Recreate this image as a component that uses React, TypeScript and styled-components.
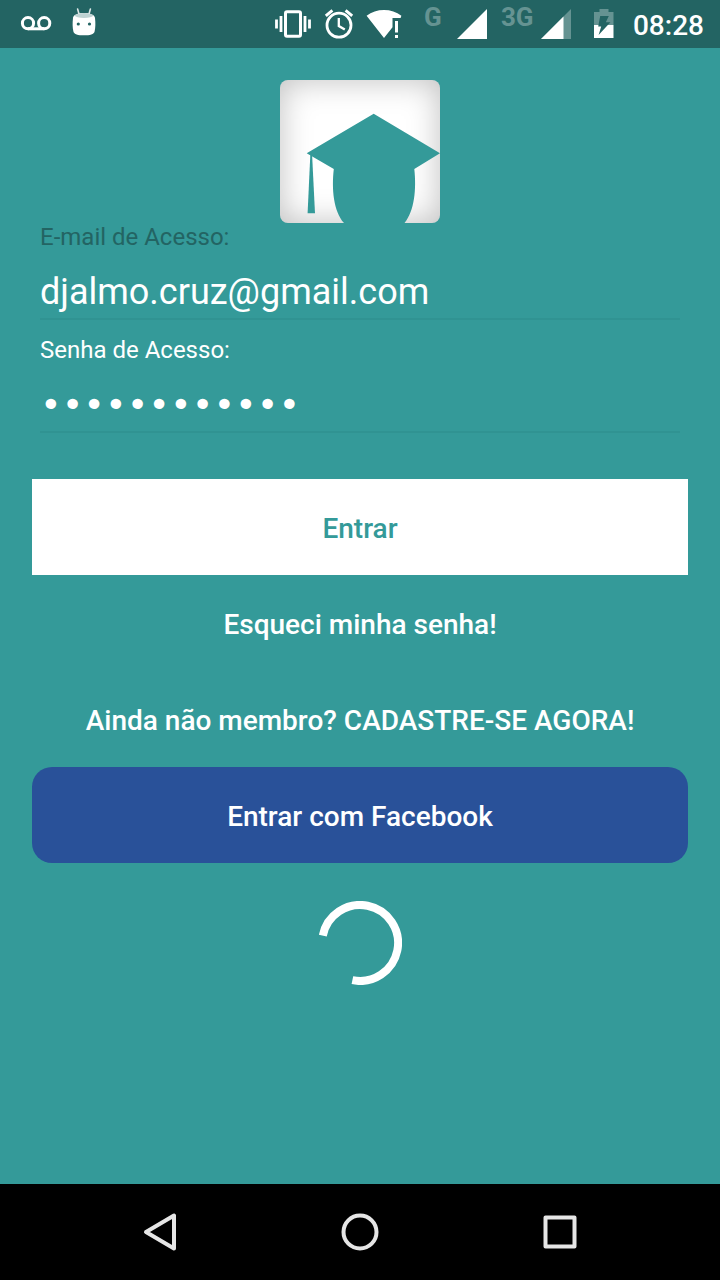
import React, { useState } from "react";
import styled, { createGlobalStyle } from "styled-components";

const teal = "#349a99";

const GlobalStyle = createGlobalStyle`
  * { box-sizing: border-box; }
  body {
    margin: 0;
    background: ${teal};
    font-family: Roboto, "Liberation Sans", sans-serif;
  }
`;

const Screen = styled.div`
  display: flex;
  flex-direction: column;
  min-height: 100vh;
  background: ${teal};
`;

const StatusBar = styled.header`
  display: flex;
  justify-content: space-between;
  height: 48px;
  padding: 0 16px 0 20px;
  background: #236463;
  color: #fff;
`;

const StatusGroup = styled.div<{ $gap: number }>`
  display: flex;
  gap: ${(p) => p.$gap}px;

  svg { display: block; }
`;

const NetworkLabel = styled.span<{ $width: number }>`
  width: ${(p) => p.$width}px;
  color: #659392;
  font-size: 26px;
  font-weight: 700;
  line-height: 34px;
  white-space: nowrap;
`;

const Clock = styled.time`
  font-size: 28px;
  font-weight: 500;
  line-height: 52px;
`;

const Content = styled.main`
  flex: 1;
  display: flex;
  flex-direction: column;
  align-items: stretch;
  padding: 32px;
`;

const Logo = styled.div`
  align-self: center;
  width: 160px;
  height: 143px;
  border-radius: 8px;
  overflow: hidden;
  background: #fff;
  box-shadow: inset 0 0 32px rgba(0, 0, 0, 0.26);

  svg { display: block; }
`;

const LoginForm = styled.form`
  display: flex;
  flex-direction: column;
`;

const Fields = styled.div`
  display: flex;
  flex-direction: column;
  gap: 16px;
  padding: 0 8px;
  margin-bottom: 46px;
`;

const Field = styled.div`
  display: flex;
  flex-direction: column;
`;

const FieldLabel = styled.label<{ $focused?: boolean }>`
  color: ${(p) => (p.$focused ? "#236463" : "#fff")};
  font-size: 24px;
  line-height: 28px;
`;

const FieldInput = styled.input`
  width: 100%;
  height: 69px;
  padding: 14px 0 0;
  border: 0;
  border-bottom: 2px solid #309392;
  border-radius: 0;
  outline: 0;
  background: transparent;
  color: #fff;
  font-family: Roboto, "Liberation Sans", sans-serif;
  font-size: 36px;

  &[type="password"] {
    font-family: "DejaVu Sans Mono", monospace;
  }
`;

const Button = styled.button<{ $kind?: "primary" | "facebook" }>`
  width: 100%;
  height: 96px;
  padding: 4px 16px 0;
  border: 0;
  border-radius: ${(p) => (p.$kind === "facebook" ? 20 : 0)}px;
  background: ${(p) =>
    p.$kind === "primary" ? "#fff" : p.$kind === "facebook" ? "#295199" : "transparent"};
  color: ${(p) => (p.$kind === "primary" ? teal : "#fff")};
  font-family: inherit;
  font-size: 28px;
  font-weight: 500;
  line-height: 36px;
  cursor: pointer;
`;

const Spinner = styled.svg`
  align-self: center;
  display: block;
  margin-top: 38px;
`;

const NavBar = styled.nav`
  display: flex;
  justify-content: center;
  height: 96px;
  background: #000;
`;

const NavButton = styled.button`
  flex: 0 1 200px;
  display: flex;
  align-items: center;
  justify-content: center;
  padding: 0;
  border: 0;
  background: transparent;
  color: #e6e6e6;
  cursor: pointer;
`;

const VoicemailIcon = () => (
  <svg width="32" height="48" viewBox="20 0 32 48" fill="none" stroke="#fff" strokeWidth="3">
    <circle cx="28" cy="23.2" r="5.6" />
    <circle cx="44.2" cy="23.2" r="5.6" />
    <path d="M28 28.8H44.2" />
  </svg>
);

const RobotIcon = () => (
  <svg width="26" height="48" viewBox="72 0 26 48">
    <path d="M77.600 9l1.400 5M90.400 9l-1.400 5" stroke="#dbe6e6" strokeWidth="1.6" strokeLinecap="round" />
    <path d="M73 18c0-3 5-5 11-5s11 2 11 5c.6 5 .5 10-.4 13.500C94 34.500 90 35.300 84 35.300s-10-.8-10.600-3.800C72.500 28 72.400 23 73 18z" fill="#fff" />
    <path d="M74.500 15.600C76 14 79.500 13 84 13s8 1 9.500 2.600c-1 1.600-4.500 2.400-9.500 2.400s-8.500-.8-9.500-2.400z" fill="#bfd3d3" />
    <circle cx="78.300" cy="24" r="1.600" fill="#236463" />
    <circle cx="89.500" cy="24" r="1.600" fill="#236463" />
  </svg>
);

const VibrateIcon = () => (
  <svg width="42" height="48" viewBox="274 0 42 48">
    <rect x="285.500" y="11.800" width="15" height="24.400" rx="1.500" fill="none" stroke="#fff" strokeWidth="3" />
    <path d="M276.500 19.500v9M309.500 19.500v9" stroke="#fff" strokeWidth="2.800" />
    <path d="M281 16v16M305 16v16" stroke="#fff" strokeWidth="2.800" />
  </svg>
);

const AlarmIcon = () => (
  <svg width="34" height="48" viewBox="324 0 34 48" fill="none" stroke="#fff">
    <circle cx="339" cy="25.200" r="12" strokeWidth="2.800" />
    <path d="M325.800 15.800l6.600-5.400M352.200 15.800l-6.600-5.400" strokeWidth="3" />
    <path d="M338.800 18v8l6 3.600" strokeWidth="2.300" />
  </svg>
);

const WifiIcon = () => (
  <svg width="50" height="48" viewBox="366 0 50 48" fill="#fff">
    <path d="M366.600 15.800C371.500 12 377.500 10 384 10s12.500 2 17.400 5.800L400.600 18H392.500v9.200L384 38z" />
    <path d="M395 21h3v11.500h-3zM395 35h3v3h-3z" />
  </svg>
);

const SignalIcon = ({ left, width, partial }: { left: number; width: number; partial?: boolean }) => (
  <svg width={width} height="48" viewBox={`${left} 0 ${width} 48`}>
    <g transform={`translate(${partial ? 541 : 457} 9)`}>
      <path d="M0 30L30 0v30z" fill={partial ? "#659392" : "#fff"} />
      {partial && <path d="M0 30L22.500 7.500V30z" fill="#fff" />}
    </g>
  </svg>
);

const BatteryIcon = () => (
  <svg width="35" height="48" viewBox="590 0 35 48">
    <path d="M594 12h5.500V9h9v3h5v13H594z" fill="#659392" />
    <path d="M594 25h19.500v13H594z" fill="#fff" />
    <path d="M600.200 16h8.600l-3 6.200h4.600L598.600 35l2.600-8.400h-3z" fill="#236463" />
  </svg>
);

const LogoArt = () => (
  <svg width="160" height="143" viewBox="0 0 160 143" fill={teal} role="img" aria-label="Logo">
    <path d="M93.700 33.700L160 73.300 134.300 89C136.500 109 134.500 131 124.500 143H64C53.500 131 51.500 109 53.800 89L26.700 73.300z" />
    <path d="M30.300 75h1.800L35 133.300h-7.400z" />
  </svg>
);

export default function App() {
  const [email, setEmail] = useState("djalmo.cruz@gmail.com");
  const [password, setPassword] = useState("abcdefghijkl");

  return (
    <Screen>
      <GlobalStyle />
      <StatusBar>
        <StatusGroup $gap={20}>
          <VoicemailIcon />
          <RobotIcon />
        </StatusGroup>
        <StatusGroup $gap={8}>
          <VibrateIcon />
          <AlarmIcon />
          <WifiIcon />
          <NetworkLabel $width={23}>G</NetworkLabel>
          <SignalIcon left={455} width={38} />
          <NetworkLabel $width={32}>3G</NetworkLabel>
          <SignalIcon left={541} width={41} partial />
          <BatteryIcon />
          <Clock>08:28</Clock>
        </StatusGroup>
      </StatusBar>

      <Content>
        <Logo>
          <LogoArt />
        </Logo>
        <LoginForm onSubmit={(e) => e.preventDefault()}>
          <Fields>
            <Field>
              <FieldLabel htmlFor="email" $focused>E-mail de Acesso:</FieldLabel>
              <FieldInput id="email" type="email" value={email} onChange={(e) => setEmail(e.target.value)} />
            </Field>
            <Field>
              <FieldLabel htmlFor="password">Senha de Acesso:</FieldLabel>
              <FieldInput id="password" type="password" value={password} onChange={(e) => setPassword(e.target.value)} />
            </Field>
          </Fields>
          <Button type="submit" $kind="primary">Entrar</Button>
          <Button type="button">Esqueci minha senha!</Button>
          <Button type="button">Ainda não membro? CADASTRE-SE AGORA!</Button>
          <Button type="button" $kind="facebook">Entrar com Facebook</Button>
        </LoginForm>
        <Spinner width="84" height="84" viewBox="0 0 84 84" role="img" aria-label="Carregando">
          <path d="M4.800 34.600A38 38 0 1 1 34.400 79.200" fill="none" stroke="#fff" strokeWidth="8" />
        </Spinner>
      </Content>

      <NavBar>
        <NavButton type="button" aria-label="Voltar">
          <svg width="40" height="40" viewBox="0 0 40 40" fill="none" stroke="currentColor" strokeWidth="4" strokeLinejoin="round">
            <path d="M34 3.500v33L6 20z" />
          </svg>
        </NavButton>
        <NavButton type="button" aria-label="Início">
          <svg width="40" height="40" viewBox="0 0 40 40" fill="none" stroke="currentColor" strokeWidth="4">
            <circle cx="20" cy="20" r="16.500" />
          </svg>
        </NavButton>
        <NavButton type="button" aria-label="Recentes">
          <svg width="40" height="40" viewBox="0 0 40 40" fill="none" stroke="currentColor" strokeWidth="4" strokeLinejoin="round">
            <rect x="5.500" y="5.500" width="29" height="29" />
          </svg>
        </NavButton>
      </NavBar>
    </Screen>
  );
}
